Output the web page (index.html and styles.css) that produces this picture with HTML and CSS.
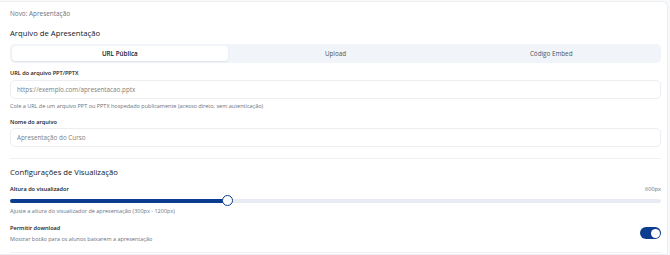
FILE: index.html
```html
<!DOCTYPE html>
<html lang="pt-BR">
    <head>
        <meta charset="UTF-8">
        <meta name="viewport" content="width=device-width, initial-scale=1.0">
        <title>Novo: Apresentação</title>
        <link rel="stylesheet" href="styles.css">
    </head>
    <body>

    <div class="card">
        <div class="card-title">Novo: Apresentação</div>

        <h2 class="section-title">Arquivo de Apresentação</h2>

        <div class="tabs">
            <div class="tab active">URL Pública</div>
            <div class="tab">Upload</div>
            <div class="tab">Código Embed</div>
        </div>

        <div class="field">
            <label class="label">URL do arquivo PPT/PPTX</label>
            <input class="input" type="text" placeholder="https://exemplo.com/apresentacao.pptx">
            <p class="help">Cole a URL de um arquivo PPT ou PPTX hospedado publicamente (acesso direto, sem autenticação)</p>
        </div>

        <div class="field field-name">
            <label class="label">Nome do arquivo</label>
            <input class="input" type="text" placeholder="Apresentação do Curso">
        </div>

        <hr class="divider">

        <h2 class="section-title section-view">Configurações de Visualização</h2>

        <div class="row-between">
            <span class="label">Altura do visualizador</span>
            <span class="value">600px</span>
        </div>
        <div class="slider">
            <div class="slider-track">
                <div class="slider-fill" style="width: 33.3%"></div>
            </div>
            <div class="slider-thumb" style="left: 33.3%"></div>
        </div>
        <p class="help">Ajuste a altura do visualizador de apresentação (300px - 1200px)</p>

        <div class="switch-row">
            <div>
                <div class="label">Permitir download</div>
                <p class="help">Mostrar botão para os alunos baixarem a apresentação</p>
            </div>
            <div class="switch on"><span class="knob"></span></div>
        </div>

        <hr class="divider divider-bottom">
    </div>

    </body>
</html>
```

FILE: styles.css
```css
* {
    box-sizing: border-box;
    margin: 0;
    padding: 0;
}
body {
    background-color: #f8f9fb;
    font-family: "Open Sans", "Noto Sans", sans-serif;
    color: #111827;
    padding-top: 1px;
    padding-right: 2px;
}
.card {
    background-color: #ffffff;
    border: 1px solid #eceef2;
    border-left-width: 0;
    border-radius: 0 6px 0 0;
    padding: 6px 6px 0 10px;
    height: 254px;
}
.card-title {
    font-size: 6.4px;
    line-height: 12px;
    color: #6b7280;
}
.section-title {
    font-size: 7.7px;
    font-weight: 500;
    line-height: 16px;
    margin-top: 5px;
    color: #111827;
}
.tabs {
    display: flex;
    margin-top: 3px;
    height: 19px;
    padding: 2px;
    background-color: #f1f4f8;
    border-radius: 5px;
}
.tab {
    flex: 1;
    display: flex;
    align-items: center;
    justify-content: center;
    font-size: 6.3px;
    color: #4b5563;
    border-radius: 4px;
}
.tab.active {
    background-color: #ffffff;
    color: #111827;
    font-weight: 600;
    box-shadow: 0 1px 2px rgba(0, 0, 0, 0.08);
}
.field {
    display: flex;
    flex-direction: column;
    margin-top: 5px;
}
.field-name {
    margin-top: 5px;
}
.label {
    display: block;
    font-size: 5.6px;
    font-weight: 600;
    line-height: 11px;
    color: #111827;
}
.input {
    margin-top: 1px;
    height: 19px;
    border: 1px solid #eceef2;
    border-radius: 5px;
    padding: 0 6px;
    font-family: inherit;
    font-size: 6.3px;
    color: #111827;
    background-color: #ffffff;
    outline: none;
}
.field-name .input {
    margin-top: 0;
}
.input::placeholder {
    color: #7d7f84;
}
.help {
    font-size: 5.5px;
    line-height: 11px;
    color: #6b7280;
    margin-top: 2px;
}
.divider {
    border: 0;
    border-top: 1px solid #eef0f3;
    margin-top: 11px;
}
.section-view {
    margin-top: 5px;
}
.row-between {
    display: flex;
    justify-content: space-between;
    align-items: center;
    margin-top: 4px;
}
.value {
    font-size: 5.6px;
    line-height: 11px;
    color: #6b7280;
}
.slider {
    position: relative;
    height: 11px;
    display: flex;
    align-items: center;
}
.slider-track {
    width: 100%;
    height: 4px;
    border-radius: 2px;
    background-color: #e8ecf2;
    overflow: hidden;
}
.slider-fill {
    height: 100%;
    background-color: #0b3c8f;
}
.slider-thumb {
    position: absolute;
    top: 0;
    width: 11px;
    height: 11px;
    margin-left: -5px;
    border-radius: 50%;
    background-color: #ffffff;
    border: 1.5px solid #0b3c8f;
}
.slider + .help {
    margin-top: 0;
}
.switch-row {
    display: flex;
    justify-content: space-between;
    align-items: flex-start;
    margin-top: 6px;
}
.switch-row .help {
    margin-top: 0;
}
.switch {
    width: 21px;
    height: 12px;
    margin-top: 4px;
    border-radius: 6px;
    background-color: #cbd5e1;
    padding: 1.5px;
    display: flex;
}
.switch.on {
    background-color: #0b3c8f;
    justify-content: flex-end;
}
.knob {
    width: 9px;
    height: 9px;
    border-radius: 50%;
    background-color: #ffffff;
}
.divider-bottom {
    margin-top: 7px;
}
```
